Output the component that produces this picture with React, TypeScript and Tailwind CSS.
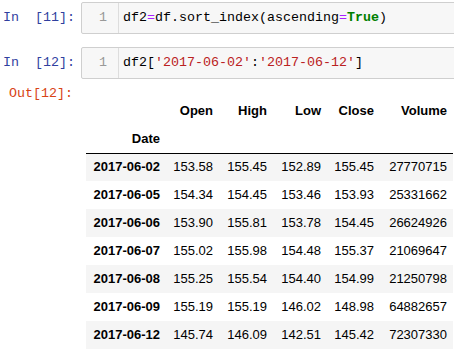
import React from 'react';

const rows: [string, string, string, string, string, string][] = [
    ['2017-06-02', '153.58', '155.45', '152.89', '155.45', '27770715'],
    ['2017-06-05', '154.34', '154.45', '153.46', '153.93', '25331662'],
    ['2017-06-06', '153.90', '155.81', '153.78', '154.45', '26624926'],
    ['2017-06-07', '155.02', '155.98', '154.48', '155.37', '21069647'],
    ['2017-06-08', '155.25', '155.54', '154.40', '154.99', '21250798'],
    ['2017-06-09', '155.19', '155.19', '146.02', '148.98', '64882657'],
    ['2017-06-12', '145.74', '146.09', '142.51', '145.42', '72307330'],
];

const mono = "font-['Liberation_Mono',monospace]";

const InputCell: React.FC<{ n: number; children: React.ReactNode; className?: string }> = ({ n, children, className }) => (
    <div className={`flex items-center ${className ?? ''}`}>
        <div className={`w-[81px] shrink-0 pl-[3px] text-[13.33px] text-[#303F9F] whitespace-pre ${mono}`}>
            {`In  [${n}]:`}
        </div>
        <div className="flex h-[32px] w-[400px] shrink-0 border border-[#cfcfcf] rounded-[2px] bg-[#f7f7f7]">
            {/* gutter */}
            <div className={`w-[37px] shrink-0 border-r border-[#dddddd] flex items-center justify-end pr-[11px] text-[13.33px] text-[#999999] ${mono}`}>
                1
            </div>
            <div className={`flex items-center pl-[4px] text-[13.33px] text-black whitespace-pre ${mono}`}>
                {children}
            </div>
        </div>
    </div>
);

export default function App() {
    return (
        <div className="w-[454px] h-[352px] overflow-hidden bg-white">
            <InputCell n={11} className="pt-[2px]">
                df2<span className="text-[#AA22FF]">=</span>df.sort_index(ascending<span className="text-[#AA22FF]">=</span>
                <span className="text-[#008000] font-bold">True</span>)
            </InputCell>

            <InputCell n={12} className="mt-[13px]">
                df2[<span className="text-[#BA2121]">'2017-06-02'</span>:<span className="text-[#BA2121]">'2017-06-12'</span>]
            </InputCell>

            {/* Output */}
            <div className="flex">
                <div className={`w-[81px] shrink-0 pl-[9px] pt-[7px] leading-[16px] text-[13.33px] text-[#D84315] ${mono}`}>
                    Out[12]:
                </div>
                <div className="pt-[18px] pl-[5px]">
                    <table className="table-fixed border-collapse text-[13px] leading-[16px] text-black font-['Liberation_Sans',Arial,sans-serif]">
                        <thead className="border-b border-black">
                            <tr className="h-[28px]">
                                <th className="w-[80px] px-[6px] text-right font-bold"></th>
                                <th className="w-[53px] px-[6px] text-right font-bold">Open</th>
                                <th className="w-[54px] px-[6px] text-right font-bold">High</th>
                                <th className="w-[54px] px-[6px] text-right font-bold">Low</th>
                                <th className="w-[53px] px-[6px] text-right font-bold">Close</th>
                                <th className="w-[73px] px-[6px] text-right font-bold">Volume</th>
                            </tr>
                            <tr className="h-[28px]">
                                <th className="px-[6px] text-right font-bold">Date</th>
                                <th></th>
                                <th></th>
                                <th></th>
                                <th></th>
                                <th></th>
                            </tr>
                        </thead>
                        <tbody>
                            {rows.map((r, i) => (
                                <tr key={r[0]} className={i % 2 === 0 ? 'h-[28px] bg-[#f5f5f5]' : 'h-[28px]'}>
                                    <th className="px-[6px] text-right font-bold">{r[0]}</th>
                                    {r.slice(1).map((v, j) => (
                                        <td key={j} className="px-[6px] text-right">{v}</td>
                                    ))}
                                </tr>
                            ))}
                        </tbody>
                    </table>
                </div>
            </div>
        </div>
    );
}
